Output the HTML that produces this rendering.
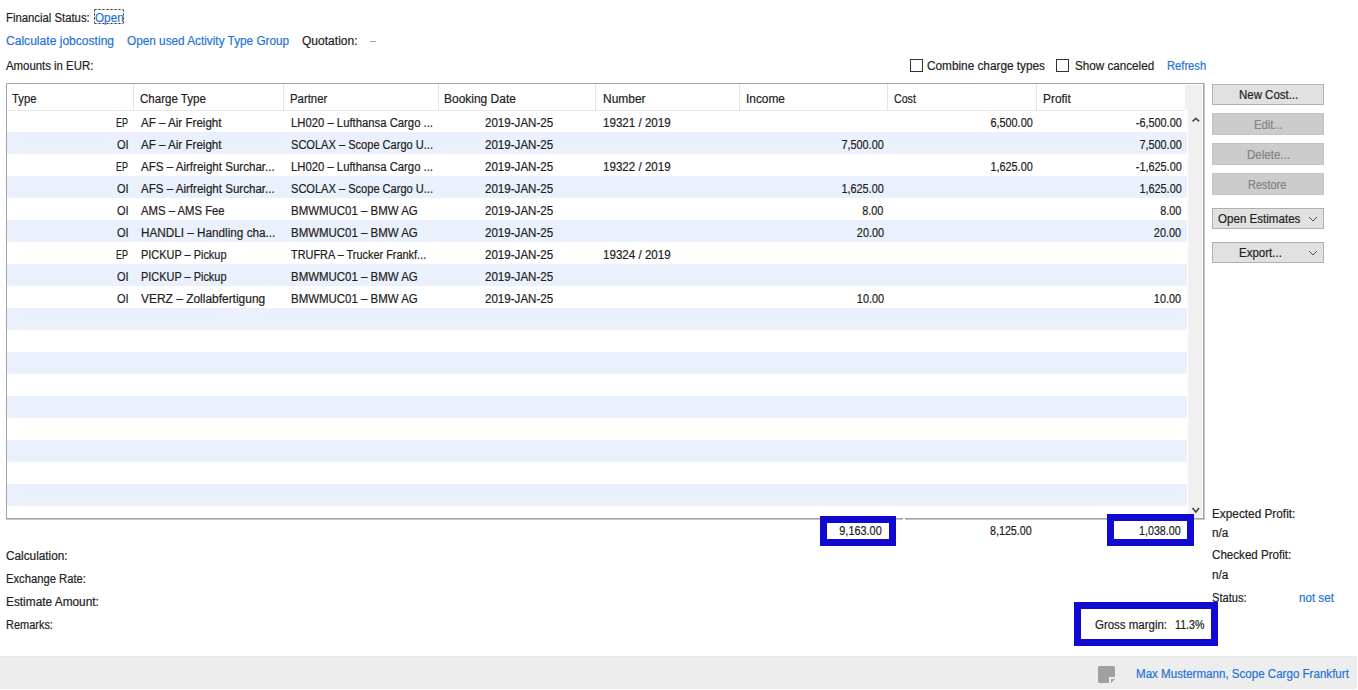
<!DOCTYPE html>
<html><head><meta charset="utf-8">
<style>
html,body{margin:0;padding:0;background:#fff;width:1358px;height:690px;overflow:hidden;position:relative;font-family:"Liberation Sans",sans-serif;font-size:12px;}
.t{position:absolute;white-space:pre;line-height:14px;font-size:12px;-webkit-text-stroke:0.2px currentColor;}
.b{position:absolute;box-sizing:border-box;}
.alt{position:absolute;left:7px;width:1180px;height:22px;background:#eaf1fc;}
.sep{position:absolute;top:84px;width:1px;height:26px;background:#e5e5e5;}
.btn{position:absolute;left:1212px;width:112px;height:21px;box-sizing:border-box;border:1px solid #b0b0b0;background:#e1e1e1;}
.btn.dis{border-color:#c2c2c2;background:#cccccc;}
.cb{position:absolute;top:59px;width:13px;height:13px;box-sizing:border-box;border:1px solid #333;background:#fff;}
.blue{position:absolute;box-sizing:border-box;border:7px solid #100ad0;background:#fff;}
</style></head><body>
<!-- focus rect around Open -->
<div class="b" style="left:94px;top:9px;width:30px;height:1px;background:repeating-linear-gradient(90deg,#999 0 1px,#333 1px 2px,#999 2px 3px,#ccc 3px 4px);"></div>
<div class="b" style="left:94px;top:23px;width:30px;height:1px;background:repeating-linear-gradient(90deg,#999 0 1px,#333 1px 2px,#999 2px 3px,#ccc 3px 4px);"></div>
<div class="b" style="left:94px;top:9px;width:1px;height:15px;background:repeating-linear-gradient(180deg,#999 0 1px,#333 1px 2px,#999 2px 3px,#ccc 3px 4px);"></div>
<div class="b" style="left:123px;top:9px;width:1px;height:15px;background:repeating-linear-gradient(180deg,#999 0 1px,#333 1px 2px,#999 2px 3px,#ccc 3px 4px);"></div>
<!-- checkboxes -->
<div class="cb" style="left:910px;"></div>
<div class="cb" style="left:1056px;"></div>
<!-- table -->
<div class="b" style="left:6px;top:83px;width:1199px;height:437px;background:#c4c7cc;"></div>
<div class="b" style="left:6px;top:83px;width:1198px;height:436px;background:#a0a5ad;"></div>
<div class="b" style="left:7px;top:84px;width:1196px;height:434px;background:#fff;"></div>
<div class="b" style="left:1188px;top:85px;width:14px;height:433px;background:#f0f0f0;"></div>
<div class="b" style="left:1185px;top:85px;width:3px;height:25px;background:#f0f0f0;"></div>
<div class="b" style="left:7px;top:110px;width:1178px;height:1px;background:#e8e8e8;"></div>
<div class="alt" style="top:132px"></div>
<div class="alt" style="top:176px"></div>
<div class="alt" style="top:220px"></div>
<div class="alt" style="top:264px"></div>
<div class="alt" style="top:308px"></div>
<div class="alt" style="top:352px"></div>
<div class="alt" style="top:396px"></div>
<div class="alt" style="top:440px"></div>
<div class="alt" style="top:484px"></div>
<div class="sep" style="left:133px"></div>
<div class="sep" style="left:283px"></div>
<div class="sep" style="left:438px"></div>
<div class="sep" style="left:595px"></div>
<div class="sep" style="left:739px"></div>
<div class="sep" style="left:887px"></div>
<div class="sep" style="left:1036px"></div>
<!-- scroll arrows -->
<svg class="b" style="left:1188px;top:114px" width="14" height="12" viewBox="0 0 14 12"><path d="M4.6 7.4 L7.9 4.2 L11.1 7.4" fill="none" stroke="#404040" stroke-width="1.5"/></svg>
<svg class="b" style="left:1188px;top:503px" width="14" height="12" viewBox="0 0 14 12"><path d="M4.5 5 L7.9 9.1 L11 5" fill="none" stroke="#404040" stroke-width="1.5"/></svg>
<!-- buttons -->
<div class="btn" style="top:84px"></div>
<div class="btn dis" style="top:113px;height:22px"></div>
<div class="btn dis" style="top:143px;height:22px"></div>
<div class="btn dis" style="top:173px;height:22px"></div>
<div class="btn" style="top:208px"></div>
<div class="btn" style="top:242px"></div>
<svg class="b" style="left:1307px;top:213px" width="12" height="12" viewBox="0 0 12 12"><path d="M2 4 L6 8 L10 4" fill="none" stroke="#505050" stroke-width="1"/></svg>
<svg class="b" style="left:1307px;top:247px" width="12" height="12" viewBox="0 0 12 12"><path d="M2 4 L6 8 L10 4" fill="none" stroke="#505050" stroke-width="1"/></svg>
<div class="b" style="left:903px;top:517px;width:2px;height:4px;background:#fff;"></div>
<!-- blue boxes -->
<div class="blue" style="left:820px;top:516px;width:76px;height:30px;"></div>
<div class="blue" style="left:1107px;top:514px;width:87px;height:32px;"></div>
<div class="blue" style="left:1074px;top:602px;width:144px;height:44px;"></div>
<!-- footer -->
<div class="b" style="left:0;top:656px;width:1357px;height:33px;background:#ededed;"></div>
<div class="b" style="left:0;top:656px;width:1357px;height:1px;background:#e7e7e7;"></div>
<svg class="b" style="left:1098px;top:666px" width="18" height="18" viewBox="0 0 18 18"><path d="M1.5 0 H15.5 Q17 0 17 1.5 V11 H11 V17 H1.5 Q0 17 0 15.5 V1.5 Q0 0 1.5 0 Z" fill="#a0a0a0"/><path d="M13 13 H17 L13 17 Z" fill="#a0a0a0"/></svg>
<div class="t" style="top:11.00px;color:#1e1e1e;left:6.40px;transform:scaleX(0.9437);transform-origin:0 50%;">Financial Status:</div>
<div class="t" style="top:11.00px;color:#1f74d6;left:95.20px;transform:scaleX(0.9762);transform-origin:0 50%;">Open</div>
<div class="t" style="top:34.00px;color:#1f74d6;left:6.20px;transform:scaleX(1.0063);transform-origin:0 50%;">Calculate jobcosting</div>
<div class="t" style="top:34.00px;color:#1f74d6;left:126.50px;transform:scaleX(0.9813);transform-origin:0 50%;">Open used Activity Type Group</div>
<div class="t" style="top:34.00px;color:#1e1e1e;left:302.20px;transform:scaleX(1.0030);transform-origin:0 50%;">Quotation:</div>
<div class="t" style="top:34.00px;color:#a0a0a0;left:370.00px;transform:scaleX(0.8571);transform-origin:0 50%;">–</div>
<div class="t" style="top:59.00px;color:#1e1e1e;left:6.40px;transform:scaleX(0.9488);transform-origin:0 50%;">Amounts in EUR:</div>
<div class="t" style="top:59.00px;color:#1e1e1e;left:927.00px;transform:scaleX(0.9828);transform-origin:0 50%;">Combine charge types</div>
<div class="t" style="top:59.00px;color:#1e1e1e;left:1074.50px;transform:scaleX(0.9726);transform-origin:0 50%;">Show canceled</div>
<div class="t" style="top:59.00px;color:#1f74d6;left:1166.50px;transform:scaleX(0.9312);transform-origin:0 50%;">Refresh</div>
<div class="t" style="top:92.00px;color:#1e1e1e;left:12.40px;transform:scaleX(0.9377);transform-origin:0 50%;">Type</div>
<div class="t" style="top:92.00px;color:#1e1e1e;left:139.50px;transform:scaleX(0.9619);transform-origin:0 50%;">Charge Type</div>
<div class="t" style="top:92.00px;color:#1e1e1e;left:289.50px;transform:scaleX(0.9478);transform-origin:0 50%;">Partner</div>
<div class="t" style="top:92.00px;color:#1e1e1e;left:443.80px;transform:scaleX(0.9976);transform-origin:0 50%;">Booking Date</div>
<div class="t" style="top:92.00px;color:#1e1e1e;left:602.50px;transform:scaleX(0.9980);transform-origin:0 50%;">Number</div>
<div class="t" style="top:92.00px;color:#1e1e1e;left:745.51px;transform:scaleX(0.9902);transform-origin:0 50%;">Income</div>
<div class="t" style="top:92.00px;color:#1e1e1e;left:894.20px;transform:scaleX(0.8879);transform-origin:0 50%;">Cost</div>
<div class="t" style="top:92.00px;color:#1e1e1e;left:1043.00px;transform:scaleX(0.9905);transform-origin:0 50%;">Profit</div>
<div class="t" style="top:116.00px;color:#1e1e1e;right:1229.50px;transform:scaleX(0.7498);transform-origin:100% 50%;">EP</div>
<div class="t" style="top:116.00px;color:#1e1e1e;left:140.90px;transform:scaleX(0.9659);transform-origin:0 50%;">AF – Air Freight</div>
<div class="t" style="top:116.00px;color:#1e1e1e;left:290.50px;transform:scaleX(0.9419);transform-origin:0 50%;">LH020 – Lufthansa Cargo ...</div>
<div class="t" style="top:116.00px;color:#1e1e1e;left:485.00px;transform:scaleX(0.9644);transform-origin:0 50%;">2019-JAN-25</div>
<div class="t" style="top:116.00px;color:#1e1e1e;left:603.00px;transform:scaleX(0.9660);transform-origin:0 50%;">19321 / 2019</div>
<div class="t" style="top:116.00px;color:#1e1e1e;right:325.00px;transform:scaleX(0.9050);transform-origin:100% 50%;">6,500.00</div>
<div class="t" style="top:116.00px;color:#1e1e1e;right:176.50px;transform:scaleX(0.9050);transform-origin:100% 50%;">-6,500.00</div>
<div class="t" style="top:138.00px;color:#1e1e1e;right:1229.19px;transform:scaleX(0.9162);transform-origin:100% 50%;">OI</div>
<div class="t" style="top:138.00px;color:#1e1e1e;left:140.90px;transform:scaleX(0.9659);transform-origin:0 50%;">AF – Air Freight</div>
<div class="t" style="top:138.00px;color:#1e1e1e;left:290.50px;transform:scaleX(0.9217);transform-origin:0 50%;">SCOLAX – Scope Cargo U...</div>
<div class="t" style="top:138.00px;color:#1e1e1e;left:485.00px;transform:scaleX(0.9644);transform-origin:0 50%;">2019-JAN-25</div>
<div class="t" style="top:138.00px;color:#1e1e1e;right:474.30px;transform:scaleX(0.9050);transform-origin:100% 50%;">7,500.00</div>
<div class="t" style="top:138.00px;color:#1e1e1e;right:176.50px;transform:scaleX(0.9050);transform-origin:100% 50%;">7,500.00</div>
<div class="t" style="top:160.00px;color:#1e1e1e;right:1229.50px;transform:scaleX(0.7498);transform-origin:100% 50%;">EP</div>
<div class="t" style="top:160.00px;color:#1e1e1e;left:140.90px;transform:scaleX(0.9636);transform-origin:0 50%;">AFS – Airfreight Surchar...</div>
<div class="t" style="top:160.00px;color:#1e1e1e;left:290.50px;transform:scaleX(0.9419);transform-origin:0 50%;">LH020 – Lufthansa Cargo ...</div>
<div class="t" style="top:160.00px;color:#1e1e1e;left:485.00px;transform:scaleX(0.9644);transform-origin:0 50%;">2019-JAN-25</div>
<div class="t" style="top:160.00px;color:#1e1e1e;left:603.00px;transform:scaleX(0.9660);transform-origin:0 50%;">19322 / 2019</div>
<div class="t" style="top:160.00px;color:#1e1e1e;right:325.00px;transform:scaleX(0.9050);transform-origin:100% 50%;">1,625.00</div>
<div class="t" style="top:160.00px;color:#1e1e1e;right:176.50px;transform:scaleX(0.9050);transform-origin:100% 50%;">-1,625.00</div>
<div class="t" style="top:182.00px;color:#1e1e1e;right:1229.19px;transform:scaleX(0.9162);transform-origin:100% 50%;">OI</div>
<div class="t" style="top:182.00px;color:#1e1e1e;left:140.90px;transform:scaleX(0.9636);transform-origin:0 50%;">AFS – Airfreight Surchar...</div>
<div class="t" style="top:182.00px;color:#1e1e1e;left:290.50px;transform:scaleX(0.9217);transform-origin:0 50%;">SCOLAX – Scope Cargo U...</div>
<div class="t" style="top:182.00px;color:#1e1e1e;left:485.00px;transform:scaleX(0.9644);transform-origin:0 50%;">2019-JAN-25</div>
<div class="t" style="top:182.00px;color:#1e1e1e;right:474.30px;transform:scaleX(0.9050);transform-origin:100% 50%;">1,625.00</div>
<div class="t" style="top:182.00px;color:#1e1e1e;right:176.50px;transform:scaleX(0.9050);transform-origin:100% 50%;">1,625.00</div>
<div class="t" style="top:204.00px;color:#1e1e1e;right:1229.19px;transform:scaleX(0.9162);transform-origin:100% 50%;">OI</div>
<div class="t" style="top:204.00px;color:#1e1e1e;left:140.90px;transform:scaleX(0.9433);transform-origin:0 50%;">AMS – AMS Fee</div>
<div class="t" style="top:204.00px;color:#1e1e1e;left:290.50px;transform:scaleX(0.9548);transform-origin:0 50%;">BMWMUC01 – BMW AG</div>
<div class="t" style="top:204.00px;color:#1e1e1e;left:485.00px;transform:scaleX(0.9644);transform-origin:0 50%;">2019-JAN-25</div>
<div class="t" style="top:204.00px;color:#1e1e1e;right:474.30px;transform:scaleX(0.9050);transform-origin:100% 50%;">8.00</div>
<div class="t" style="top:204.00px;color:#1e1e1e;right:176.50px;transform:scaleX(0.9050);transform-origin:100% 50%;">8.00</div>
<div class="t" style="top:226.00px;color:#1e1e1e;right:1229.19px;transform:scaleX(0.9162);transform-origin:100% 50%;">OI</div>
<div class="t" style="top:226.00px;color:#1e1e1e;left:140.90px;transform:scaleX(0.9776);transform-origin:0 50%;">HANDLI – Handling cha...</div>
<div class="t" style="top:226.00px;color:#1e1e1e;left:290.50px;transform:scaleX(0.9548);transform-origin:0 50%;">BMWMUC01 – BMW AG</div>
<div class="t" style="top:226.00px;color:#1e1e1e;left:485.00px;transform:scaleX(0.9644);transform-origin:0 50%;">2019-JAN-25</div>
<div class="t" style="top:226.00px;color:#1e1e1e;right:474.30px;transform:scaleX(0.9050);transform-origin:100% 50%;">20.00</div>
<div class="t" style="top:226.00px;color:#1e1e1e;right:176.50px;transform:scaleX(0.9050);transform-origin:100% 50%;">20.00</div>
<div class="t" style="top:248.00px;color:#1e1e1e;right:1229.50px;transform:scaleX(0.7498);transform-origin:100% 50%;">EP</div>
<div class="t" style="top:248.00px;color:#1e1e1e;left:140.90px;transform:scaleX(0.9114);transform-origin:0 50%;">PICKUP – Pickup</div>
<div class="t" style="top:248.00px;color:#1e1e1e;left:290.50px;transform:scaleX(0.9093);transform-origin:0 50%;">TRUFRA – Trucker Frankf...</div>
<div class="t" style="top:248.00px;color:#1e1e1e;left:485.00px;transform:scaleX(0.9644);transform-origin:0 50%;">2019-JAN-25</div>
<div class="t" style="top:248.00px;color:#1e1e1e;left:603.00px;transform:scaleX(0.9660);transform-origin:0 50%;">19324 / 2019</div>
<div class="t" style="top:270.00px;color:#1e1e1e;right:1229.19px;transform:scaleX(0.9162);transform-origin:100% 50%;">OI</div>
<div class="t" style="top:270.00px;color:#1e1e1e;left:140.90px;transform:scaleX(0.9114);transform-origin:0 50%;">PICKUP – Pickup</div>
<div class="t" style="top:270.00px;color:#1e1e1e;left:290.50px;transform:scaleX(0.9548);transform-origin:0 50%;">BMWMUC01 – BMW AG</div>
<div class="t" style="top:270.00px;color:#1e1e1e;left:485.00px;transform:scaleX(0.9644);transform-origin:0 50%;">2019-JAN-25</div>
<div class="t" style="top:292.00px;color:#1e1e1e;right:1229.19px;transform:scaleX(0.9162);transform-origin:100% 50%;">OI</div>
<div class="t" style="top:292.00px;color:#1e1e1e;left:140.90px;transform:scaleX(0.9955);transform-origin:0 50%;">VERZ – Zollabfertigung</div>
<div class="t" style="top:292.00px;color:#1e1e1e;left:290.50px;transform:scaleX(0.9548);transform-origin:0 50%;">BMWMUC01 – BMW AG</div>
<div class="t" style="top:292.00px;color:#1e1e1e;left:485.00px;transform:scaleX(0.9644);transform-origin:0 50%;">2019-JAN-25</div>
<div class="t" style="top:292.00px;color:#1e1e1e;right:474.30px;transform:scaleX(0.9050);transform-origin:100% 50%;">10.00</div>
<div class="t" style="top:292.00px;color:#1e1e1e;right:176.50px;transform:scaleX(0.9050);transform-origin:100% 50%;">10.00</div>
<div class="t" style="top:524.00px;color:#1e1e1e;right:475.80px;transform:scaleX(0.9078);transform-origin:100% 50%;">9,163.00</div>
<div class="t" style="top:524.00px;color:#1e1e1e;right:326.29px;transform:scaleX(0.8929);transform-origin:100% 50%;">8,125.00</div>
<div class="t" style="top:524.00px;color:#1e1e1e;right:177.29px;transform:scaleX(0.8929);transform-origin:100% 50%;">1,038.00</div>
<div class="t" style="top:549.00px;color:#1e1e1e;left:6.40px;transform:scaleX(0.9829);transform-origin:0 50%;">Calculation:</div>
<div class="t" style="top:572.00px;color:#1e1e1e;left:6.40px;transform:scaleX(0.9359);transform-origin:0 50%;">Exchange Rate:</div>
<div class="t" style="top:595.00px;color:#1e1e1e;left:6.40px;transform:scaleX(0.9876);transform-origin:0 50%;">Estimate Amount:</div>
<div class="t" style="top:618.00px;color:#1e1e1e;left:6.40px;transform:scaleX(0.9136);transform-origin:0 50%;">Remarks:</div>
<div class="t" style="top:507.00px;color:#1e1e1e;left:1212.00px;transform:scaleX(0.9837);transform-origin:0 50%;">Expected Profit:</div>
<div class="t" style="top:526.00px;color:#1e1e1e;left:1212.00px;transform:scaleX(0.9819);transform-origin:0 50%;">n/a</div>
<div class="t" style="top:548.00px;color:#1e1e1e;left:1212.00px;transform:scaleX(0.9669);transform-origin:0 50%;">Checked Profit:</div>
<div class="t" style="top:568.00px;color:#1e1e1e;left:1212.00px;transform:scaleX(0.9819);transform-origin:0 50%;">n/a</div>
<div class="t" style="top:591.00px;color:#1e1e1e;left:1212.00px;transform:scaleX(0.9238);transform-origin:0 50%;">Status:</div>
<div class="t" style="top:591.00px;color:#1f74d6;left:1298.50px;transform:scaleX(0.9676);transform-origin:0 50%;">not set</div>
<div class="t" style="top:618.00px;color:#1e1e1e;left:1094.80px;transform:scaleX(0.9558);transform-origin:0 50%;">Gross margin:</div>
<div class="t" style="top:618.00px;color:#1e1e1e;left:1175.00px;transform:scaleX(0.8875);transform-origin:0 50%;">11.3%</div>
<div class="t" style="top:88.00px;color:#1e1e1e;left:1238.80px;transform:scaleX(0.9549);transform-origin:0 50%;">New Cost...</div>
<div class="t" style="top:118.00px;color:#838383;left:1253.60px;transform:scaleX(0.9359);transform-origin:0 50%;">Edit...</div>
<div class="t" style="top:148.00px;color:#838383;left:1246.70px;transform:scaleX(0.9604);transform-origin:0 50%;">Delete...</div>
<div class="t" style="top:178.00px;color:#838383;left:1248.30px;transform:scaleX(0.9116);transform-origin:0 50%;">Restore</div>
<div class="t" style="top:212.00px;color:#1e1e1e;left:1218.00px;transform:scaleX(0.9652);transform-origin:0 50%;">Open Estimates</div>
<div class="t" style="top:246.00px;color:#1e1e1e;left:1238.50px;transform:scaleX(0.9583);transform-origin:0 50%;">Export...</div>
<div class="t" style="top:667.00px;color:#1f74d6;left:1136.30px;transform:scaleX(0.9642);transform-origin:0 50%;">Max Mustermann, Scope Cargo Frankfurt</div>
</body></html>
